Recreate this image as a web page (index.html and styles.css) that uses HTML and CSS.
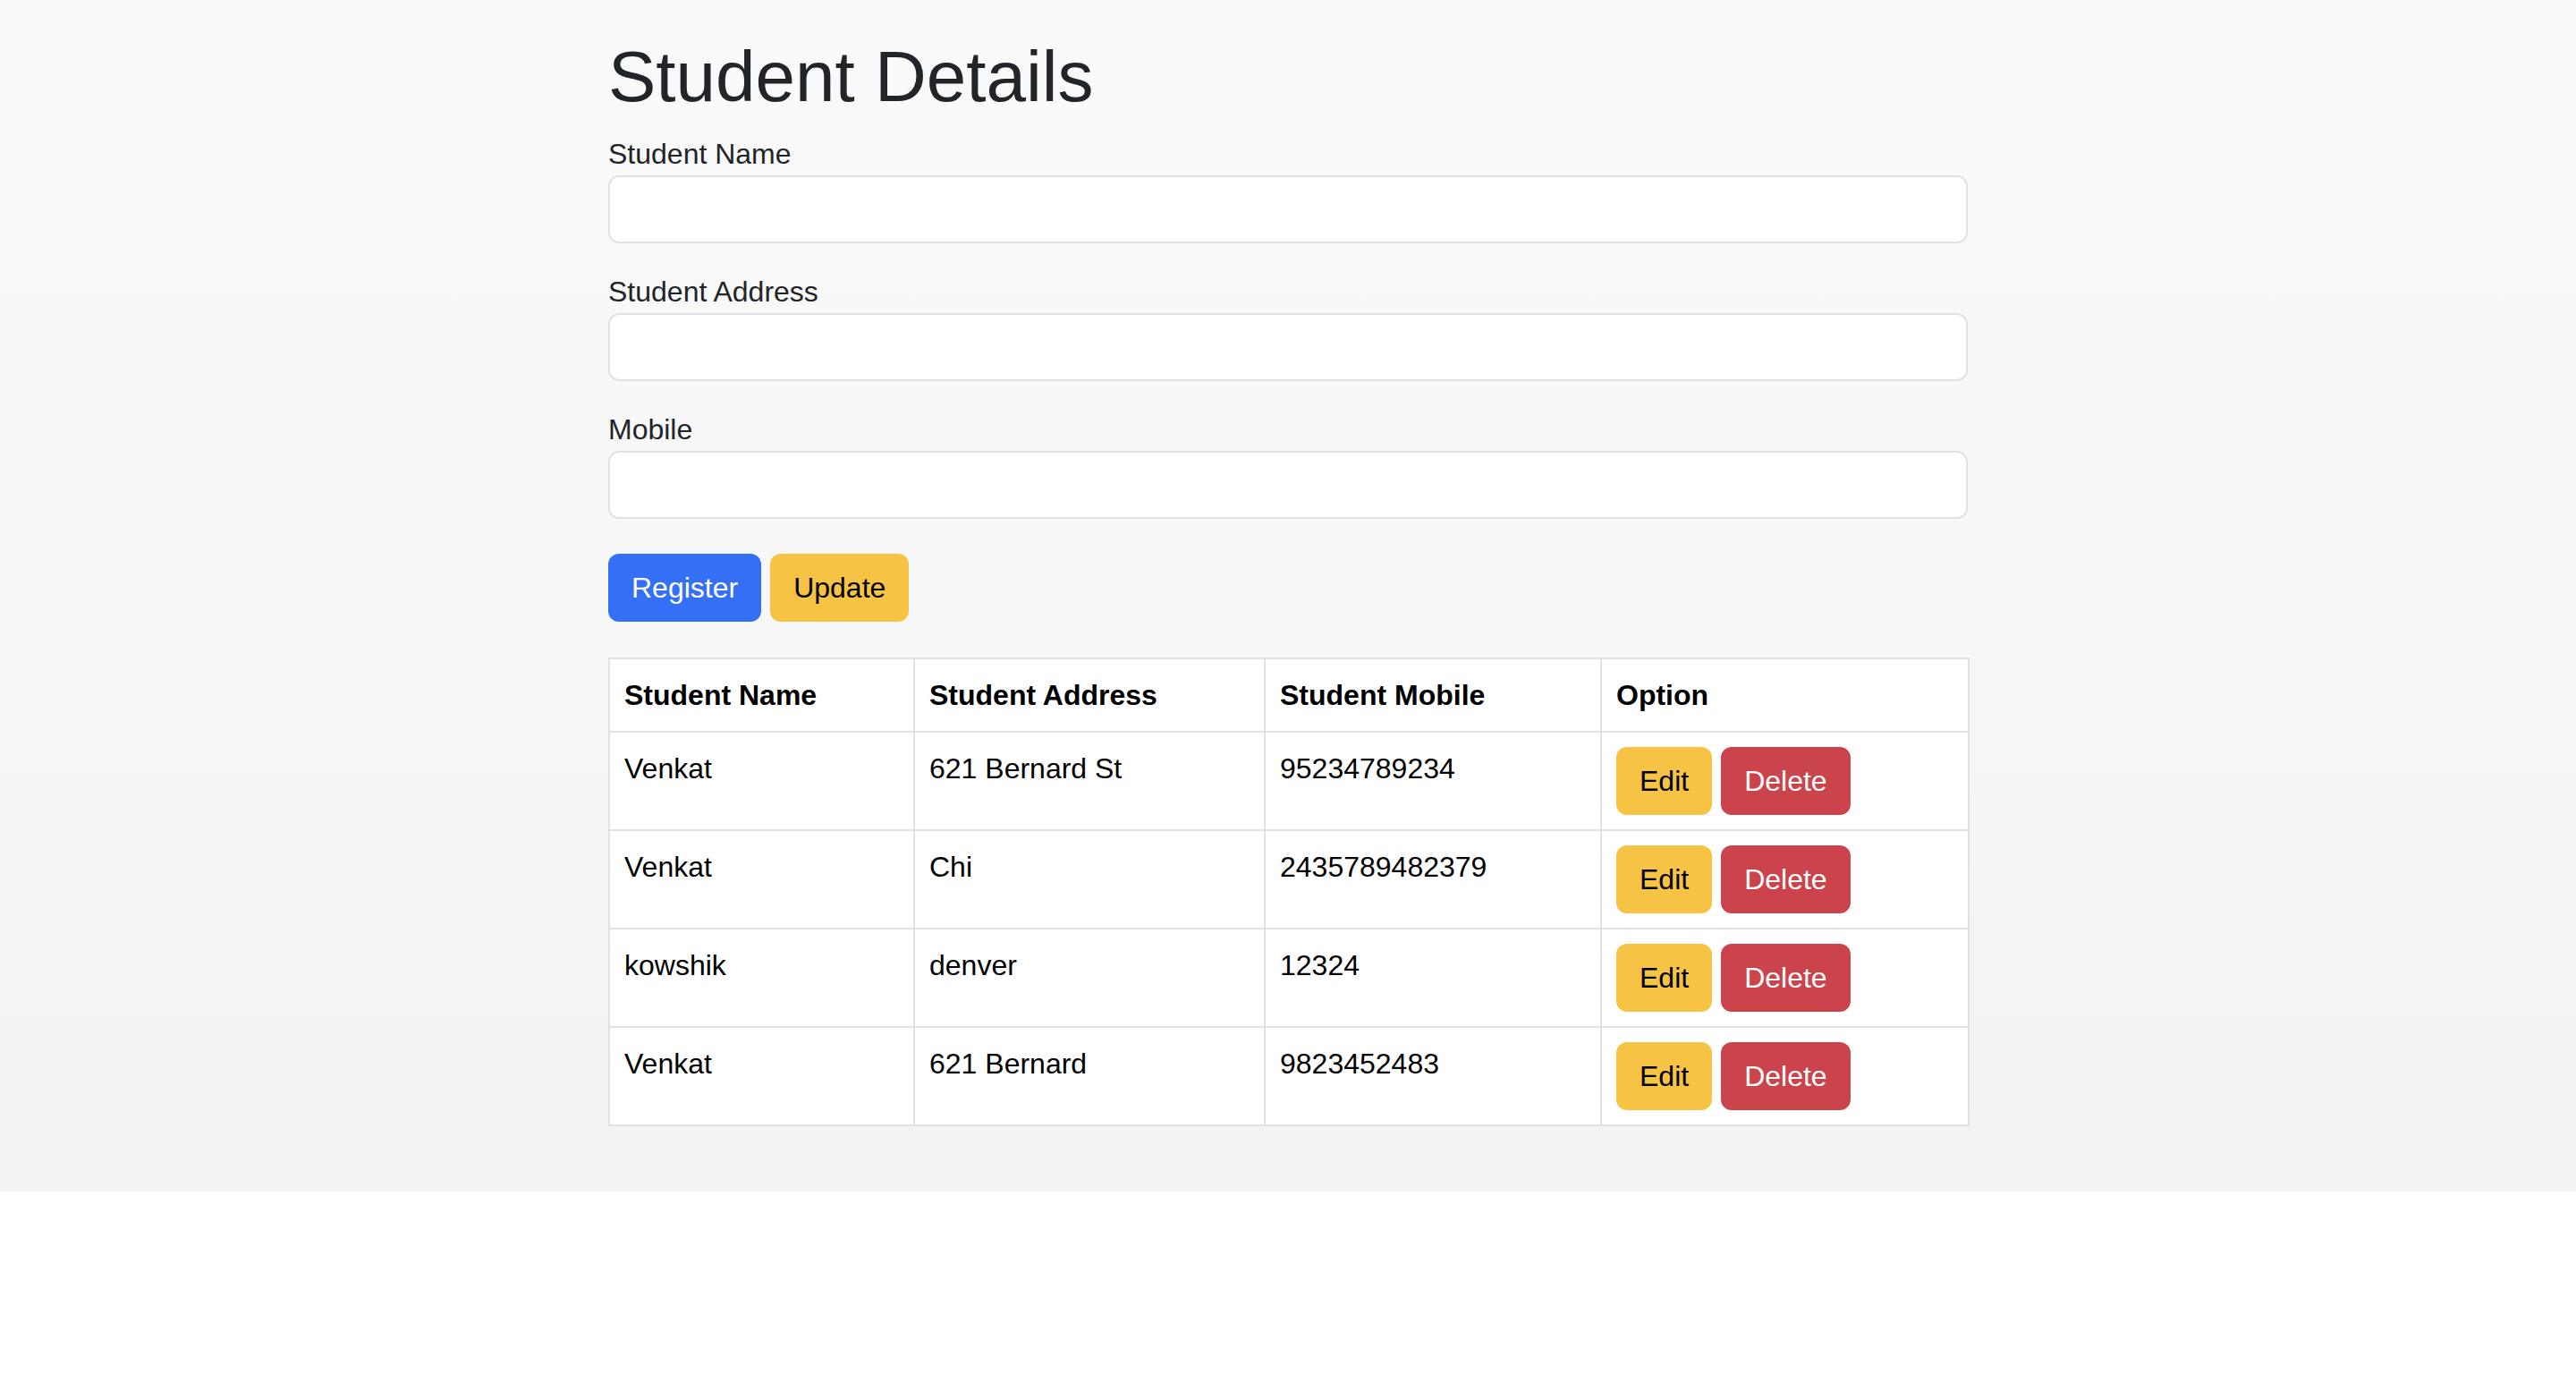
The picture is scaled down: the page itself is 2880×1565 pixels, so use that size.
FILE: index.html
```html
<!DOCTYPE html>
<html lang="en">
<head>
<meta charset="utf-8">
<title>Student Details</title>
<link rel="stylesheet" href="styles.css">
</head>
<body>
<div class="page">
  <div class="container">
    <h1 class="title">Student Details</h1>
    <form class="form">
      <div class="group">
        <label class="label" for="name">Student Name</label>
        <input class="field" id="name" type="text">
      </div>
      <div class="group">
        <label class="label" for="address">Student Address</label>
        <input class="field" id="address" type="text">
      </div>
      <div class="group">
        <label class="label" for="mobile">Mobile</label>
        <input class="field" id="mobile" type="text">
      </div>
      <div class="actions">
        <button type="button" class="btn btn-primary">Register</button>
        <button type="button" class="btn btn-warning">Update</button>
      </div>
    </form>
    <table class="table">
      <thead>
        <tr>
          <th class="col-name">Student Name</th>
          <th class="col-address">Student Address</th>
          <th class="col-mobile">Student Mobile</th>
          <th class="col-option">Option</th>
        </tr>
      </thead>
      <tbody>
        <tr>
          <td>Venkat</td>
          <td>621 Bernard St</td>
          <td>95234789234</td>
          <td><div class="row-actions"><button type="button" class="btn btn-warning">Edit</button><button type="button" class="btn btn-danger">Delete</button></div></td>
        </tr>
        <tr>
          <td>Venkat</td>
          <td>Chi</td>
          <td>2435789482379</td>
          <td><div class="row-actions"><button type="button" class="btn btn-warning">Edit</button><button type="button" class="btn btn-danger">Delete</button></div></td>
        </tr>
        <tr>
          <td>kowshik</td>
          <td>denver</td>
          <td>12324</td>
          <td><div class="row-actions"><button type="button" class="btn btn-warning">Edit</button><button type="button" class="btn btn-danger">Delete</button></div></td>
        </tr>
        <tr>
          <td>Venkat</td>
          <td>621 Bernard</td>
          <td>9823452483</td>
          <td><div class="row-actions"><button type="button" class="btn btn-warning">Edit</button><button type="button" class="btn btn-danger">Delete</button></div></td>
        </tr>
      </tbody>
    </table>
  </div>
</div>
</body>
</html>
```

FILE: styles.css
```css
* {
  box-sizing: border-box;
}

html, body {
  margin: 0;
  padding: 0;
  background: #ffffff;
}

body {
  font-family: "Liberation Sans", Arial, sans-serif;
  font-size: 32px;
  line-height: 48px;
  color: #212529;
}

.page {
  background: linear-gradient(180deg, #fafafa 0%, #f7f7f7 50%, #f2f2f2 100%);
  padding: 38px 0 41px;
}

.container {
  width: 1520px;
  margin: 0 auto;
}

.title {
  margin: 0 0 14px;
  font-size: 80px;
  line-height: 96px;
  font-weight: 500;
  color: #212529;
}

.form {
  margin: 0;
}

.group {
  display: flex;
  flex-direction: column;
  margin-bottom: 30px;
}

.label {
  display: block;
  font-size: 32px;
  line-height: 48px;
  color: #212529;
}

.field {
  display: block;
  width: 100%;
  height: 76px;
  padding: 12px 24px;
  font: inherit;
  background: #ffffff;
  border: 2px solid #dee2e6;
  border-radius: 12px;
  outline: none;
}

.actions {
  display: flex;
  gap: 10px;
  margin-top: 39px;
  margin-bottom: 40px;
}

.btn {
  display: inline-block;
  height: 76px;
  padding: 12px 24px;
  font-family: inherit;
  font-size: 32px;
  line-height: 48px;
  border: 2px solid transparent;
  border-radius: 12px;
  cursor: pointer;
}

.btn-primary {
  background: #3470f5;
  color: #ffffff;
}

.btn-warning {
  background: #f6c344;
  color: #000000;
}

.btn-danger {
  background: #cb444b;
  color: #ffffff;
}

.table {
  width: 100%;
  table-layout: fixed;
  border-collapse: collapse;
  background: #ffffff;
  color: #000000;
  margin-bottom: 32px;
}

.table th,
.table td {
  border: 2px solid #dee2e6;
  padding: 16px;
  text-align: left;
  vertical-align: top;
  font-size: 32px;
  line-height: 48px;
}

.table th {
  font-weight: 700;
}

.col-name { width: 341px; }
.col-address { width: 392px; }
.col-mobile { width: 376px; }
.col-option { width: 411px; }

.row-actions {
  display: flex;
  gap: 10px;
}
```
